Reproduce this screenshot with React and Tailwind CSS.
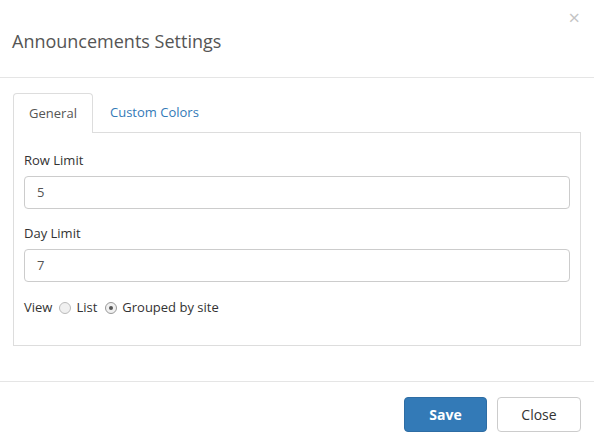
export default function App() {
  return (
    <div className="w-[594px] h-[445px] bg-white text-[13px] text-[#333] font-['Open_Sans',sans-serif] relative">
      <button className="absolute right-[14px] top-[8px] text-[20px] leading-none text-[#c4c4c4]">×</button>
      <div className="h-[78px] px-[12px] flex items-center border-b border-[#e5e5e5]">
        <h4 className="text-[18px] text-[#555] mt-[6px]">Announcements Settings</h4>
      </div>

      <div className="px-[13px] pt-[15px] h-[303px]">
        <div className="flex h-[40px]">
          <div className="w-[80px] border border-[#ddd] border-b-0 rounded-t-[4px] bg-white flex items-center justify-center text-[#555] relative z-10">
            General
          </div>
          <div className="flex-1 border-b border-[#ddd] flex items-center pl-[17px] text-[#337ab7]">
            Custom Colors
          </div>
        </div>
        <div className="border border-t-0 border-[#ddd] h-[214px] px-[10px] pt-[19px] -mt-px">
          <label className="block leading-[18px] mb-[7px]">Row Limit</label>
          <div className="h-[33px] border border-[#ccc] rounded-[4px] flex items-center px-[12px] text-[#555] mb-[15px]">5</div>
          <label className="block leading-[18px] mb-[7px]">Day Limit</label>
          <div className="h-[33px] border border-[#ccc] rounded-[4px] flex items-center px-[12px] text-[#555] mb-[16px]">7</div>
          <div className="flex items-center gap-[5px]">
            <span>View</span>
            <span className="w-[12px] h-[12px] rounded-full border border-[#bbb] bg-[#f0f0f0] ml-[2px]"></span>
            <span>List</span>
            <span className="w-[12px] h-[12px] rounded-full border border-[#999] bg-[#f0f0f0] ml-[3px] flex items-center justify-center">
              <span className="w-[4px] h-[4px] rounded-full bg-[#555]"></span>
            </span>
            <span>Grouped by site</span>
          </div>
        </div>
      </div>

      <div className="border-t border-[#e5e5e5] flex justify-end gap-[10px] px-[13px] pt-[15px]">
        <button className="w-[83px] h-[35px] rounded-[4px] bg-[#337ab7] border border-[#2e6da4] text-white font-bold text-[14px]">Save</button>
        <button className="w-[84px] h-[35px] rounded-[4px] bg-white border border-[#ccc] text-[#333] text-[14px]">Close</button>
      </div>
    </div>
  );
}
